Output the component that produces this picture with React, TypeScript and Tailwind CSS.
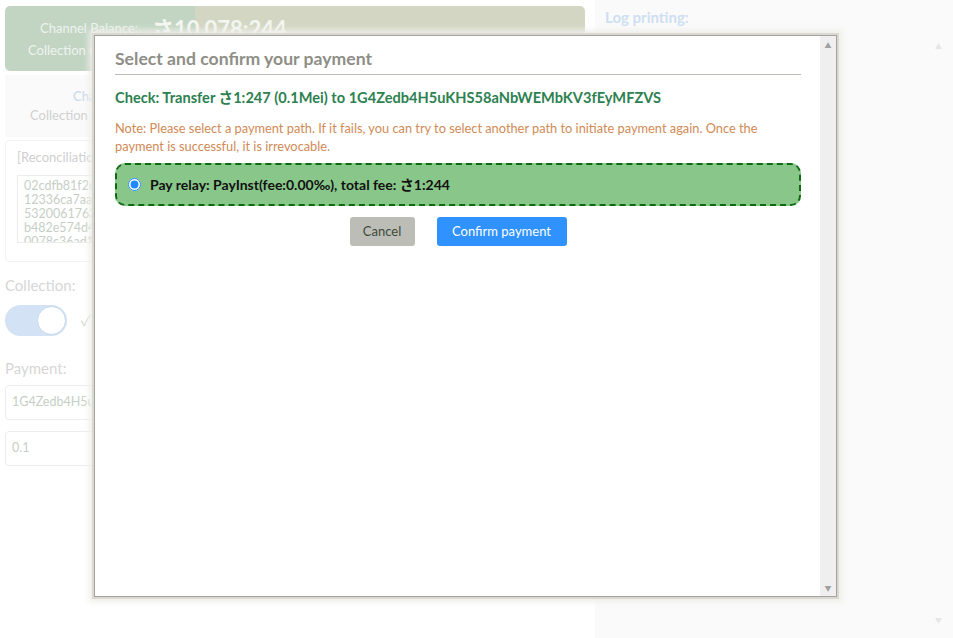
import React from "react";

const HEX = [
  "02cdfb81f2c5a1e9d3f70b44c8e1",
  "12336ca7aad0e94f21b7c6d802aa",
  "5320061763f8d1c0a2e5b97f31c4",
  "b482e574d4c09a7f62e1d35c8b07",
  "0078c36ad1f5e2b49a0c7d61e3f2",
];

function Background() {
  return (
    <div className="flex h-full w-full">
      <div className="flex w-[595px] shrink-0 flex-col pl-[5px] pr-[10px] pt-[6px]">
        <div className="flex h-[65px] flex-col justify-center rounded-[5px] bg-[linear-gradient(90deg,#c2d5c3_0_190px,#d3d6c3_190px)] pl-[23px]">
          <div className="flex items-center gap-[14px] pl-[12px]">
            <span className="text-[13px] text-[#eef3ee]">Channel Balance:</span>
            <span className="text-[22px] font-bold leading-[24px] text-[#f4f6f2]">さ10,078:244</span>
          </div>
          <div className="text-[13px] text-[#eef3ee]">Collection channel: opened</div>
        </div>
        <div className="mt-[4px] flex h-[62px] flex-col justify-center bg-[#fafafa] pl-[25px]">
          <div className="pl-[43px] text-[13px] text-[#c9d9ec]">Channel status</div>
          <div className="text-[13px] text-[#d0d0d0]">Collection address: 1G4Zedb4H5uK</div>
        </div>
        <div className="mt-[3px] h-[122px] rounded-[4px] border border-[#f2f2f2] px-[11px] pt-[7px]">
          <div className="text-[13px] text-[#cfcfcf]">[Reconciliation]</div>
          <div className="mt-[7px] h-[68px] overflow-hidden border border-[#ececec] px-[6px] pt-[3px] text-[12.5px] leading-[14px] text-[#c6cfc6]">
            {HEX.map((h) => (
              <div key={h}>{h}</div>
            ))}
          </div>
        </div>
        <div className="mt-[12px] text-[15px] text-[#d6d6d6]">Collection:</div>
        <div className="mt-[8px] flex items-center gap-[14px]">
          <div className="flex h-[31px] w-[62px] items-center justify-end rounded-full bg-[#d3e2f5] pr-[1px]">
            <div className="h-[29px] w-[29px] rounded-full border border-[#c5d8f0] bg-white" />
          </div>
          <span className="text-[15px] text-[#cfdccf]">✓</span>
        </div>
        <div className="mt-[21px] text-[15px] text-[#d6d6d6]">Payment:</div>
        <div className="mt-[6px] flex h-[35px] items-center rounded-[4px] border border-[#ededed] px-[6px] text-[12.5px] text-[#c6cfc6]">
          1G4Zedb4H5uKHS58aNbWEMbKV3fEyMFZVS
        </div>
        <div className="mt-[11px] flex h-[35px] items-center rounded-[4px] border border-[#ededed] px-[6px] text-[12.5px] text-[#c6cfc6]">
          0.1
        </div>
      </div>
      <div className="flex flex-1 flex-col bg-[#fafafa] pl-[10px] pr-[10px] pt-[6px]">
        <div className="text-[15px] font-bold text-[#cfdff2]">Log printing:</div>
        <div className="mt-[14px] flex flex-1 flex-col items-end justify-between pb-[14px] pr-[1px]">
          <span className="text-[7px] leading-none text-[#e6e6e6]">▲</span>
          <span className="text-[7px] leading-none text-[#e6e6e6]">▼</span>
        </div>
      </div>
    </div>
  );
}

function Modal() {
  return (
    <div className="absolute left-[95px] top-[36px] flex h-[560px] w-[741px] bg-white shadow-[0_0_0_1px_#a3a39b,0_0_0_3px_#d9d9d2,0_0_6px_6px_#eeeeea]">
      <div className="flex flex-1 flex-col pl-[20px] pr-[19px] pt-[9px]">
        <div className="border-b border-[#bdbdb8] pb-[1px] text-[17.6px] font-bold leading-[28px] text-[#8e8e86]">
          Select and confirm your payment
        </div>
        <div className="mt-[13px] text-[14.6px] font-bold leading-[20px] text-[#2d8150]">
          Check: Transfer さ1:247 (0.1Mei) to 1G4Zedb4H5uKHS58aNbWEMbKV3fEyMFZVS
        </div>
        <div className="mt-[11px] text-[12.8px] leading-[18px] text-[#d18a55]">
          Note: Please select a payment path. If it fails, you can try to select another path to initiate payment again. Once the payment is successful, it is irrevocable.
        </div>
        <label className="mt-[8px] flex h-[43px] items-center gap-[9px] rounded-[10px] border-2 border-dashed border-[#0d6a10] bg-[#89c68a] pl-[11px]">
          <input type="radio" defaultChecked className="h-[13px] w-[13px] accent-[#1e88ff]" />
          <span className="text-[14px] font-bold text-[#111]">
            Pay relay: PayInst(fee:0.00‰), total fee: さ1:244
          </span>
        </label>
        <div className="mt-[11px] flex justify-center gap-[22px]">
          <button className="h-[29px] w-[65px] rounded-[3px] bg-[#bdbdb7] text-[13px] text-[#3a4a3a]">
            Cancel
          </button>
          <button className="h-[29px] w-[130px] rounded-[3px] bg-[#2f92fe] text-[13px] text-white">
            Confirm payment
          </button>
        </div>
      </div>
      <div className="flex w-[16px] flex-col items-center justify-between bg-[#efefef] pb-[4px] pt-[6px]">
        <span className="text-[7px] leading-none text-[#a0a0a0]">▲</span>
        <span className="text-[7px] leading-none text-[#a0a0a0]">▼</span>
      </div>
    </div>
  );
}

export default function App() {
  return (
    <div className="relative h-[638px] w-[953px] overflow-hidden bg-white font-['Lato','Noto_Sans_CJK_JP',sans-serif]">
      <Background />
      <Modal />
    </div>
  );
}
